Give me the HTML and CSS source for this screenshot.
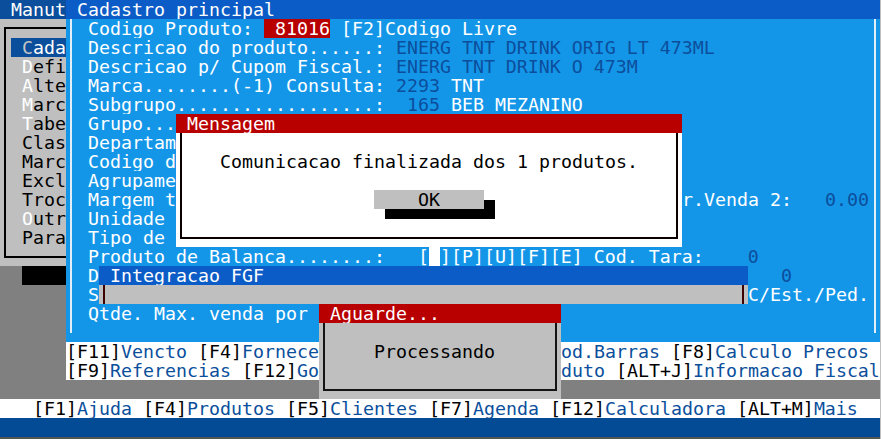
FILE: index.html
```
<!DOCTYPE html>
<html>
<head>
<meta charset="utf-8">
<title>Cadastro principal</title>
<link rel="stylesheet" href="styles.css">
</head>
<body>
<div class="screen">
  <div class="row"><div class="seg left tb"> Manut</div><div class="seg fill tc"> Cadastro principal</div></div>
  <div class="row"><div class="seg left g"></div><div class="seg fill p">  Codigo Produto: <span class="red"> 81016</span> [F2]Codigo Livre</div></div>
  <div class="row"><div class="seg left g"> <span class="hl"> <span class="hc">C</span>ada</span></div><div class="seg fill p">  Descricao do produto......: <span class="v">ENERG TNT DRINK ORIG LT 473ML</span></div></div>
  <div class="row"><div class="seg left g">  <span class="hk">D</span>efi</div><div class="seg fill p">  Descricao p/ Cupom Fiscal.: <span class="v">ENERG TNT DRINK O 473M</span></div></div>
  <div class="row"><div class="seg left g">  <span class="hk">A</span>lte</div><div class="seg fill p">  Marca........(-1) Consulta: <span class="v">2293</span> TNT</div></div>
  <div class="row"><div class="seg left g">  <span class="hk">M</span>arc</div><div class="seg fill p">  Subgrupo..................: <span class="v"> 165</span> BEB MEZANINO</div></div>
  <div class="row"><div class="seg left g">  <span class="hk">T</span>abe</div><div class="seg fill p">  Grupo...</div></div>
  <div class="row"><div class="seg left g">  Clas</div><div class="seg fill p">  Departam</div></div>
  <div class="row"><div class="seg left g">  Marc</div><div class="seg fill p">  Codigo d</div></div>
  <div class="row"><div class="seg left g">  Excl</div><div class="seg fill p">  Agrupame</div></div>
  <div class="row"><div class="seg left g">  Troc</div><div class="seg p">  Margem t</div><div class="seg p gap46"></div><div class="seg fill p">r.Venda 2:   <span class="v">0.00</span></div></div>
  <div class="row"><div class="seg left g">  <span class="hk">O</span>utr</div><div class="seg fill p">  Unidade </div></div>
  <div class="row"><div class="seg left g">  Para</div><div class="seg fill p">  Tipo de </div></div>
  <div class="row"><div class="seg left g"></div><div class="seg fill p">  Produto de Balanca........:   [<span class="cur"> </span>][P][U][F][E] Cod. Tara:    <span class="v">0</span></div></div>
  <div class="row"><div class="seg left dg">  <span class="blk">    </span></div><div class="seg p">  D</div><div class="seg p gap62"></div><div class="seg fill p"><span class="v">0</span></div></div>
  <div class="row"><div class="seg left dg"></div><div class="seg p">  S</div><div class="seg p gap59"></div><div class="seg fill p">C/Est./Ped.</div></div>
  <div class="row"><div class="seg left dg"></div><div class="seg fill p">  Qtde. Max. venda por</div></div>
  <div class="row"><div class="seg left dg"></div><div class="seg fill p"></div></div>
  <div class="row"><div class="seg left dg"></div><div class="seg wk"><span class="k">[F11]</span>Vencto <span class="k">[F4]</span>Fornece</div><div class="seg wk gap22"></div><div class="seg fill wk">od.Barras <span class="k">[F8]</span>Calculo Precos</div></div>
  <div class="row"><div class="seg left dg"></div><div class="seg wk"><span class="k">[F9]</span>Referencias <span class="k">[F12]</span>Go</div><div class="seg wk gap22"></div><div class="seg fill wk">duto <span class="k">[ALT+J]</span>Informacao Fiscal</div></div>
  <div class="row"><div class="seg fill dg"></div></div>
  <div class="row"><div class="seg fill wk">   <span class="k">[F1]</span>Ajuda <span class="k">[F4]</span>Produtos <span class="k">[F5]</span>Clientes <span class="k">[F7]</span>Agenda <span class="k">[F12]</span>Calculadora <span class="k">[ALT+M]</span>Mais</div></div>
  <div class="row"><div class="seg fill sb"></div></div>
  <div class="tail"></div>

  <div class="menu-frame"></div>
  <div class="panel-frame"></div>

  <div class="win win-msg">
    <div class="wtitle red"> Mensagem</div>
    <div class="wbody white-body">
      <div class="frame black-line">
        <div class="msg-text">Comunicacao finalizada dos 1 produtos.</div>
        <div class="btn">    OK    </div>
      </div>
    </div>
  </div>

  <div class="win win-int">
    <div class="wtitle tc"> Integracao FGF</div>
    <div class="wbody gray-body">
      <div class="frame maroon-line"></div>
    </div>
  </div>

  <div class="win win-ag">
    <div class="wtitle red"> Aguarde...</div>
    <div class="wbody gray-body">
      <div class="frame dark-line">
        <div class="proc-text">Processando</div>
      </div>
    </div>
  </div>
</div>
</body>
</html>
```

FILE: styles.css
```
html, body {
  margin: 0;
  padding: 0;
  background: #bfbfbf;
  overflow: hidden;
}

.screen {
  position: relative;
  width: 880px;
  height: 439px;
  font-family: "DejaVu Sans Mono", monospace;
  font-size: 18.27px;
  line-height: 19px;
  color: #ffffff;
}

.row {
  display: flex;
  height: 19px;
}

.seg {
  white-space: pre;
  overflow: hidden;
  height: 19px;
  flex: none;
}

.left { width: 66px; }
.fill { flex: 1 1 auto; }

.gap22 { width: 242px; }
.gap46 { width: 506px; }
.gap59 { width: 649px; }
.gap62 { width: 682px; }

.tb { background: #0b4e9c; color: #ffffff; }
.tc { background: #0b5cc6; color: #ffffff; }
.p  { background: #1496e8; color: #ffffff; }
.g  { background: #bfbfbf; color: #000000; }
.dg { background: #808080; }
.sb { background: #034b94; }
.wk { background: #ffffff; color: #0b4f9c; }

.red { background: #b90000; color: #ffffff; }
.v   { color: #0c4e9c; }
.hl  { background: #0b4e9c; color: #ffffff; }
.hc  { color: #c4c4c4; }
.hk  { color: #ffffff; }
.blk { background: #000000; }
.cur { background: #ffffff; }
.k   { color: #000000; }

.tail {
  height: 2px;
  background: #555555;
}

.menu-frame {
  position: absolute;
  left: 4px;
  top: 27px;
  width: 62px;
  height: 231px;
  box-sizing: border-box;
  border: 2px solid #000000;
  border-right: none;
}

.panel-frame {
  position: absolute;
  left: 70px;
  top: 19px;
  width: 806px;
  height: 314px;
  box-sizing: border-box;
  border-left: 2px solid #e2eef8;
  border-right: 2px solid #e2eef8;
}

.win {
  position: absolute;
  display: flex;
  flex-direction: column;
}

.wtitle {
  height: 19px;
  white-space: pre;
  flex: none;
}

.wbody {
  flex: 1 1 auto;
  box-sizing: border-box;
  display: flex;
}

.white-body { background: #ffffff; color: #000000; }
.gray-body  { background: #bfbfbf; color: #000000; }

.frame {
  flex: 1 1 auto;
  box-sizing: border-box;
  border-left: 2px solid;
  border-right: 2px solid;
  display: flex;
  flex-direction: column;
  align-items: flex-start;
}

.black-line  { border-color: #0a0000; border-bottom: 2px solid #0a0000; }
.dark-line   { border-color: #141414; border-bottom: 2px solid #141414; }
.maroon-line { border-color: #3c0000; }

.win-msg {
  left: 176px;
  top: 114px;
  width: 506px;
  height: 133px;
}
.win-msg .wbody { padding: 0 4px 8px 4px; }
.win-msg .frame { padding: 19px 0 0 38px; }

.msg-text {
  height: 19px;
  white-space: pre;
}

.btn {
  margin-top: 19px;
  margin-left: 154px;
  height: 19px;
  white-space: pre;
  background: #bfbfbf;
  color: #000000;
  box-shadow: 11px 10px 0 #000000;
}

.win-int {
  left: 99px;
  top: 266px;
  width: 649px;
  height: 38px;
}
.win-int .wbody { padding: 0 4px; }

.win-ag {
  left: 319px;
  top: 304px;
  width: 242px;
  height: 95px;
}
.win-ag .wbody { padding: 0 4px 8px 4px; }
.win-ag .frame { padding: 19px 0 0 49px; }

.proc-text {
  height: 19px;
  white-space: pre;
}
```
